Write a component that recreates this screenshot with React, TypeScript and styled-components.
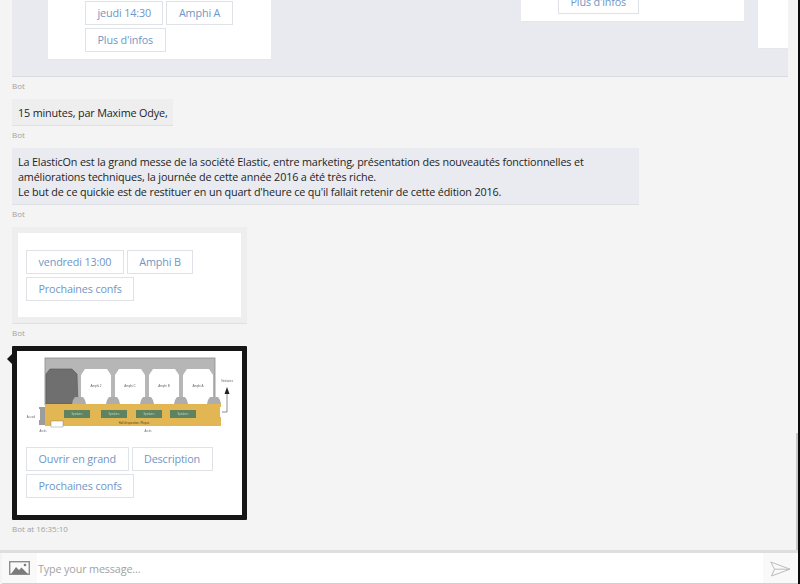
import React from "react";
import styled, { createGlobalStyle } from "styled-components";

const Global = createGlobalStyle`
  html, body { margin: 0; padding: 0; height: 100%; background: #f4f4f4; overflow: hidden; }
  #root { height: 100%; }
  * { box-sizing: border-box; }
`;

const Shell = styled.div`
  height: 584px;
  width: 800px;
  display: flex;
  flex-direction: column;
  border-right: 2px solid #0c0c0c;
  background: #f4f4f4;
  font-family: "Open Sans", "Noto Sans", sans-serif;
  color: #222;
`;

const Main = styled.div`
  flex: 1;
  min-height: 0;
  display: flex;
`;

const Log = styled.div`
  flex: 1;
  min-width: 0;
  overflow: hidden;
  display: flex;
  flex-direction: column;
  justify-content: flex-end;
  padding: 0 8px 8px 12px;
`;

const ScrollTrack = styled.div`
  width: 2px;
  display: flex;
  flex-direction: column;
  justify-content: flex-end;
`;

const ScrollThumb = styled.div`
  height: 117px;
  background: #c8c8c8;
`;

const Carousel = styled.div`
  flex: 0 0 auto;
  height: 141px;
  display: flex;
  align-items: flex-start;
  gap: 14px;
  padding: 6px 0 0 36px;
  overflow: hidden;
  background: #e8eaef;
  border-bottom: 1px solid #d9dbe0;
`;

const SlideCard = styled.div<{ $height: number }>`
  flex: 0 0 222.5px;
  height: ${(p) => p.$height}px;
  display: flex;
  flex-direction: column;
  justify-content: flex-end;
  padding: 0 8px 7px 37px;
  background: #ffffff;
  border-bottom: 1px solid #e6e7ea;
`;

const Sender = styled.div`
  flex: 0 0 auto;
  height: 22px;
  padding-top: 3px;
  font-size: 8px;
  line-height: 12px;
  color: #a2a2a2;
`;

const Bubble = styled.div<{ $bg: string }>`
  flex: 0 0 auto;
  align-self: flex-start;
  padding: 6px 6px 4px;
  background: ${(p) => p.$bg};
  border-bottom: 1px solid #dfe0e3;
  font-size: 10.8px;
  letter-spacing: -0.15px;
  line-height: 15px;
  color: #242424;
`;

const WideBubble = styled(Bubble)`
  width: 627px;
  height: 57px;
`;

const ShortBubble = styled(Bubble)`
  width: 161px;
  height: 27px;
  white-space: nowrap;
`;

const CardBubble = styled.div`
  flex: 0 0 auto;
  align-self: flex-start;
  width: 235px;
  padding: 6px;
  background: #eeeeee;
  border-bottom: 1px solid #e0e0e0;
`;

const CardBody = styled.div`
  background: #ffffff;
  height: 84px;
  padding: 17px 8px;
`;

const ImageBubble = styled.div`
  position: relative;
  flex: 0 0 auto;
  align-self: flex-start;
  width: 235px;
  height: 174px;
  border: 5px solid #161616;
  border-radius: 1px;
  background: #ffffff;
  &::before {
    content: "";
    position: absolute;
    left: -15px;
    top: 3px;
    border: 5px solid transparent;
    border-right-color: #161616;
  }
`;

const MapArt = styled.svg`
  display: block;
  width: 224px;
  height: 89px;
  filter: blur(0.45px);
`;

const ImageActions = styled.div`
  padding: 7px 9px 0;
`;

const Actions = styled.div`
  display: flex;
  flex-wrap: wrap;
  gap: 3px;
`;

const ActionButton = styled.button`
  height: 24px;
  padding: 0 11.5px;
  margin: 0;
  background: #ffffff;
  border: 1px solid #dfe2e6;
  border-radius: 0;
  font-family: inherit;
  font-size: 10.8px;
  letter-spacing: -0.15px;
  line-height: 20px;
  color: #6f96c6;
  white-space: nowrap;
`;

const ComposerBar = styled.div`
  flex: 0 0 34px;
  display: flex;
  padding-left: 2px;
  border-top: 3px solid #dedede;
`;

const Composer = styled.div`
  flex: 1;
  display: flex;
  align-items: stretch;
  background: #ffffff;
  border-bottom: 1px solid #d0d0d0;
`;

const IconSlot = styled.div`
  flex: 0 0 35px;
  display: flex;
  align-items: center;
  justify-content: center;
  padding-top: 1px;
  background: #f9f9f9;
`;

const MessageField = styled.div`
  flex: 1;
  display: flex;
  align-items: center;
  padding: 1px 0 0 1px;
  font-size: 10.8px;
  letter-spacing: -0.15px;
  color: #a3a3a3;
`;

const PictureIcon = () => (
  <svg width="21" height="15" viewBox="0 0 21 15">
    <rect x="0.7" y="0.7" width="19.6" height="12.6" fill="none" stroke="#8d8d8d" strokeWidth="1.4" />
    <path d="M2 13 L7 6 L10 9 L12.5 6.5 L19 13 Z" fill="#7b7b7b" />
    <circle cx="16" cy="4" r="1.3" fill="#7b7b7b" />
  </svg>
);

const SendIcon = () => (
  <svg width="21" height="16" viewBox="0 0 21 16">
    <path d="M0.8 1 L20 8.2 L1.5 15 L4.5 8.2 Z M4.5 8.2 L20 8.2" fill="none" stroke="#bcbcbc" strokeWidth="1" strokeLinejoin="round" />
  </svg>
);

const rooms = [64, 98, 132, 166];
const roomLabels = ["Amphi 2", "Amphi C", "Amphi B", "Amphi A"];
const booths = [47, 84, 119, 153];
const pillars = [62, 96, 130, 164, 197];

const RoomMap = () => (
  <MapArt viewBox="0 0 224 89">
    <rect x="28" y="7" width="170" height="47" fill="#b6b6b6" stroke="#8c8c8c" strokeWidth="0.8" />
    <path d="M29 53 L29 23 L33 18 L55 18 L60 23 L61 53 Z" fill="#6f6f6f" stroke="#555" strokeWidth="0.6" />
    {rooms.map((x, i) => (
      <g key={x}>
        <path d={`M${x} 53 L${x} 24 L${x + 4} 18 L${x + 26} 18 L${x + 30} 24 L${x + 30} 53 Z`} fill="#ffffff" />
        <text x={x + 15} y="36" fontSize="3" textAnchor="middle" fill="#666" fontFamily="Liberation Sans">{roomLabels[i]}</text>
      </g>
    ))}
    {pillars.map((x) => (
      <path key={x} d={`M${x - 7} 53 L${x - 6} 49 L${x - 4} 46 L${x + 4} 46 L${x + 6} 49 L${x + 7} 53 Z`} fill="#adadad" />
    ))}
    <rect x="22" y="56" width="6" height="18" fill="#9c9c9c" />
    <rect x="21" y="58" width="2" height="11" fill="#ffffff" />
    <rect x="28" y="53" width="176" height="22" fill="#e2b652" />
    {booths.map((x) => (
      <g key={x}>
        <rect x={x} y="59" width="26" height="8" fill="#5f8261" />
        <text x={x + 13} y="64" fontSize="2.6" textAnchor="middle" fill="#c4d3c2" fontFamily="Liberation Sans">Speakers</text>
      </g>
    ))}
    <text x="117" y="72.5" fontSize="2.8" textAnchor="middle" fill="#5a4a1c" fontFamily="Liberation Sans">Hall d'exposition / Repas</text>
    <rect x="34" y="70" width="12" height="6" fill="#ffffff" stroke="#777" strokeWidth="0.4" />
    <rect x="203" y="56" width="2" height="10" fill="#ffffff" />
    <path d="M205 61 H210 V42" fill="none" stroke="#444" strokeWidth="0.6" />
    <path d="M207.5 43 L210 36 L212.5 43 Z" fill="#222" />
    <text x="210" y="31" fontSize="2.8" textAnchor="middle" fill="#666" fontFamily="Liberation Sans">Vestiaires</text>
    <text x="14" y="67" fontSize="2.6" textAnchor="middle" fill="#666" fontFamily="Liberation Sans">Accueil</text>
    <text x="26" y="81" fontSize="2.6" textAnchor="middle" fill="#666" fontFamily="Liberation Sans">Accès</text>
    <text x="131" y="81" fontSize="2.6" textAnchor="middle" fill="#666" fontFamily="Liberation Sans">Accès</text>
  </MapArt>
);

export default function App() {
  return (
    <Shell>
      <Global />
      <Main>
        <Log>
          <Carousel>
            <SlideCard $height={118}>
              <Actions>
                <ActionButton>jeudi 14:30</ActionButton>
                <ActionButton>Amphi A</ActionButton>
                <ActionButton>Plus d'infos</ActionButton>
              </Actions>
            </SlideCard>
            <SlideCard $height={40} />
            <SlideCard $height={80}>
              <Actions>
                <ActionButton>Plus d'infos</ActionButton>
              </Actions>
            </SlideCard>
            <SlideCard $height={107} />
          </Carousel>
          <Sender>Bot</Sender>
          <ShortBubble $bg="#eeeeef">15 minutes, par Maxime Odye,</ShortBubble>
          <Sender>Bot</Sender>
          <WideBubble $bg="#e9ebf0">
            La ElasticOn est la grand messe de la société Elastic, entre marketing, présentation des nouveautés fonctionnelles et
            <br />
            améliorations techniques, la journée de cette année 2016 a été très riche.
            <br />
            Le but de ce quickie est de restituer en un quart d'heure ce qu'il fallait retenir de cette édition 2016.
          </WideBubble>
          <Sender>Bot</Sender>
          <CardBubble>
            <CardBody>
              <Actions>
                <ActionButton>vendredi 13:00</ActionButton>
                <ActionButton>Amphi B</ActionButton>
                <ActionButton>Prochaines confs</ActionButton>
              </Actions>
            </CardBody>
          </CardBubble>
          <Sender>Bot</Sender>
          <ImageBubble>
            <RoomMap />
            <ImageActions>
              <Actions>
                <ActionButton>Ouvrir en grand</ActionButton>
                <ActionButton>Description</ActionButton>
                <ActionButton>Prochaines confs</ActionButton>
              </Actions>
            </ImageActions>
          </ImageBubble>
          <Sender>Bot at 16:35:10</Sender>
        </Log>
        <ScrollTrack>
          <ScrollThumb />
        </ScrollTrack>
      </Main>
      <ComposerBar>
        <Composer>
          <IconSlot>
            <PictureIcon />
          </IconSlot>
          <MessageField>Type your message...</MessageField>
          <IconSlot>
            <SendIcon />
          </IconSlot>
        </Composer>
      </ComposerBar>
    </Shell>
  );
}
